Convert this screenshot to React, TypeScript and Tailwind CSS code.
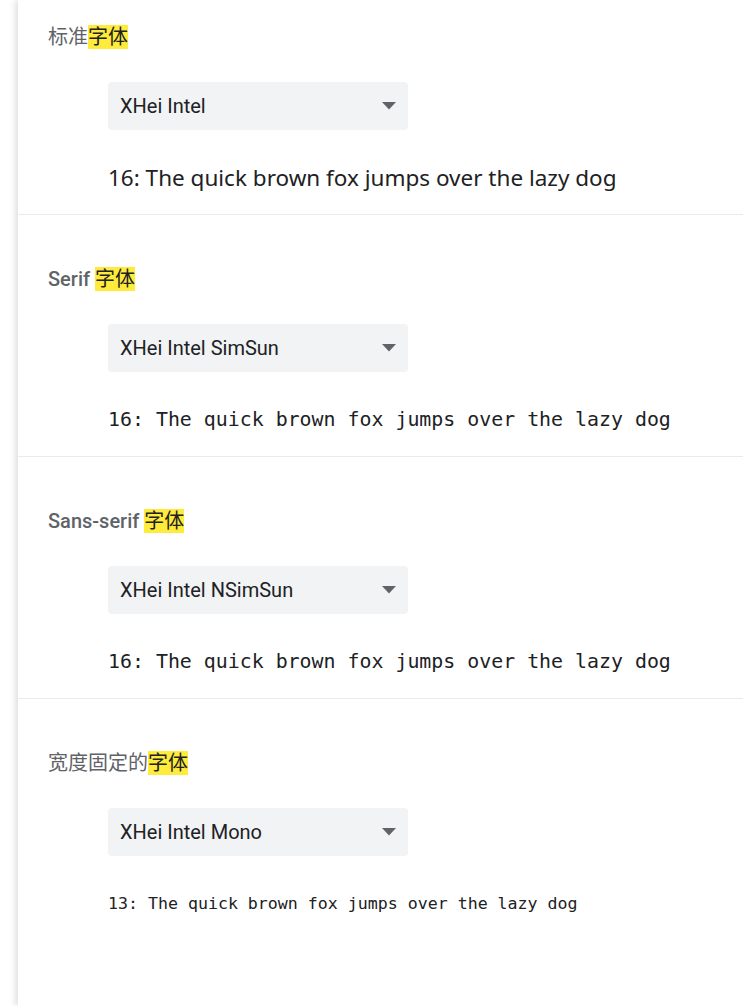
import { Fragment } from 'react'

const sections = [
  {
    label: '标准',
    labelClass: 'font-normal',
    font: 'XHei Intel',
    sample: '16: The quick brown fox jumps over the lazy dog',
    sampleClass: "text-[22.5px] font-['Noto_Sans',sans-serif]",
  },
  {
    label: 'Serif ',
    labelClass: 'font-medium',
    font: 'XHei Intel SimSun',
    sample: '16: The quick brown fox jumps over the lazy dog',
    sampleClass: "text-[19.9px] font-['DejaVu_Sans_Mono',monospace]",
  },
  {
    label: 'Sans-serif ',
    labelClass: 'font-medium',
    font: 'XHei Intel NSimSun',
    sample: '16: The quick brown fox jumps over the lazy dog',
    sampleClass: "text-[19.9px] font-['DejaVu_Sans_Mono',monospace]",
  },
  {
    label: '宽度固定的',
    labelClass: 'font-normal',
    font: 'XHei Intel Mono',
    sample: '13: The quick brown fox jumps over the lazy dog',
    sampleClass: "text-[16.6px] font-['DejaVu_Sans_Mono',monospace]",
  },
]

export default function App() {
  return (
    <div className="min-h-[1006px] bg-white pl-[18px] font-['Roboto','Noto_Sans_CJK_SC',sans-serif]">
      <div className="min-h-[1006px] bg-white shadow-[-3px_0_6px_rgba(0,0,0,0.12)]">
        {sections.map((s, i) => (
          <section
            key={s.font}
            className={`${i === 0 ? 'pt-[25px]' : 'pt-[52px]'} ${i < 3 ? 'border-b border-[#e8eaed]' : ''} pb-[20px]`}
          >
            <h2 className={`pl-[30px] h-6 leading-6 text-[20px] text-[#5f6368] ${s.labelClass}`}>
              <Fragment>{s.label}</Fragment>
              <span className="bg-[#ffeb3b] text-[#202124] font-normal">字体</span>
            </h2>

            {/* font select */}
            <div className="ml-[90px] mt-[33px] w-[300px] h-12 rounded bg-[#f1f3f4] flex items-center justify-between pl-3 pr-[12px]">
              <span className="text-[20px] text-[#202124]">{s.font}</span>
              <svg width="14" height="8" viewBox="0 0 14 8">
                <path d="M0 0h14L7 7.5z" fill="#5f6368" />
              </svg>
            </div>

            <p className={`ml-[90px] mt-8 h-8 leading-8 text-[#202124] whitespace-nowrap ${s.sampleClass}`}>
              {s.sample}
            </p>
          </section>
        ))}
      </div>
    </div>
  )
}
